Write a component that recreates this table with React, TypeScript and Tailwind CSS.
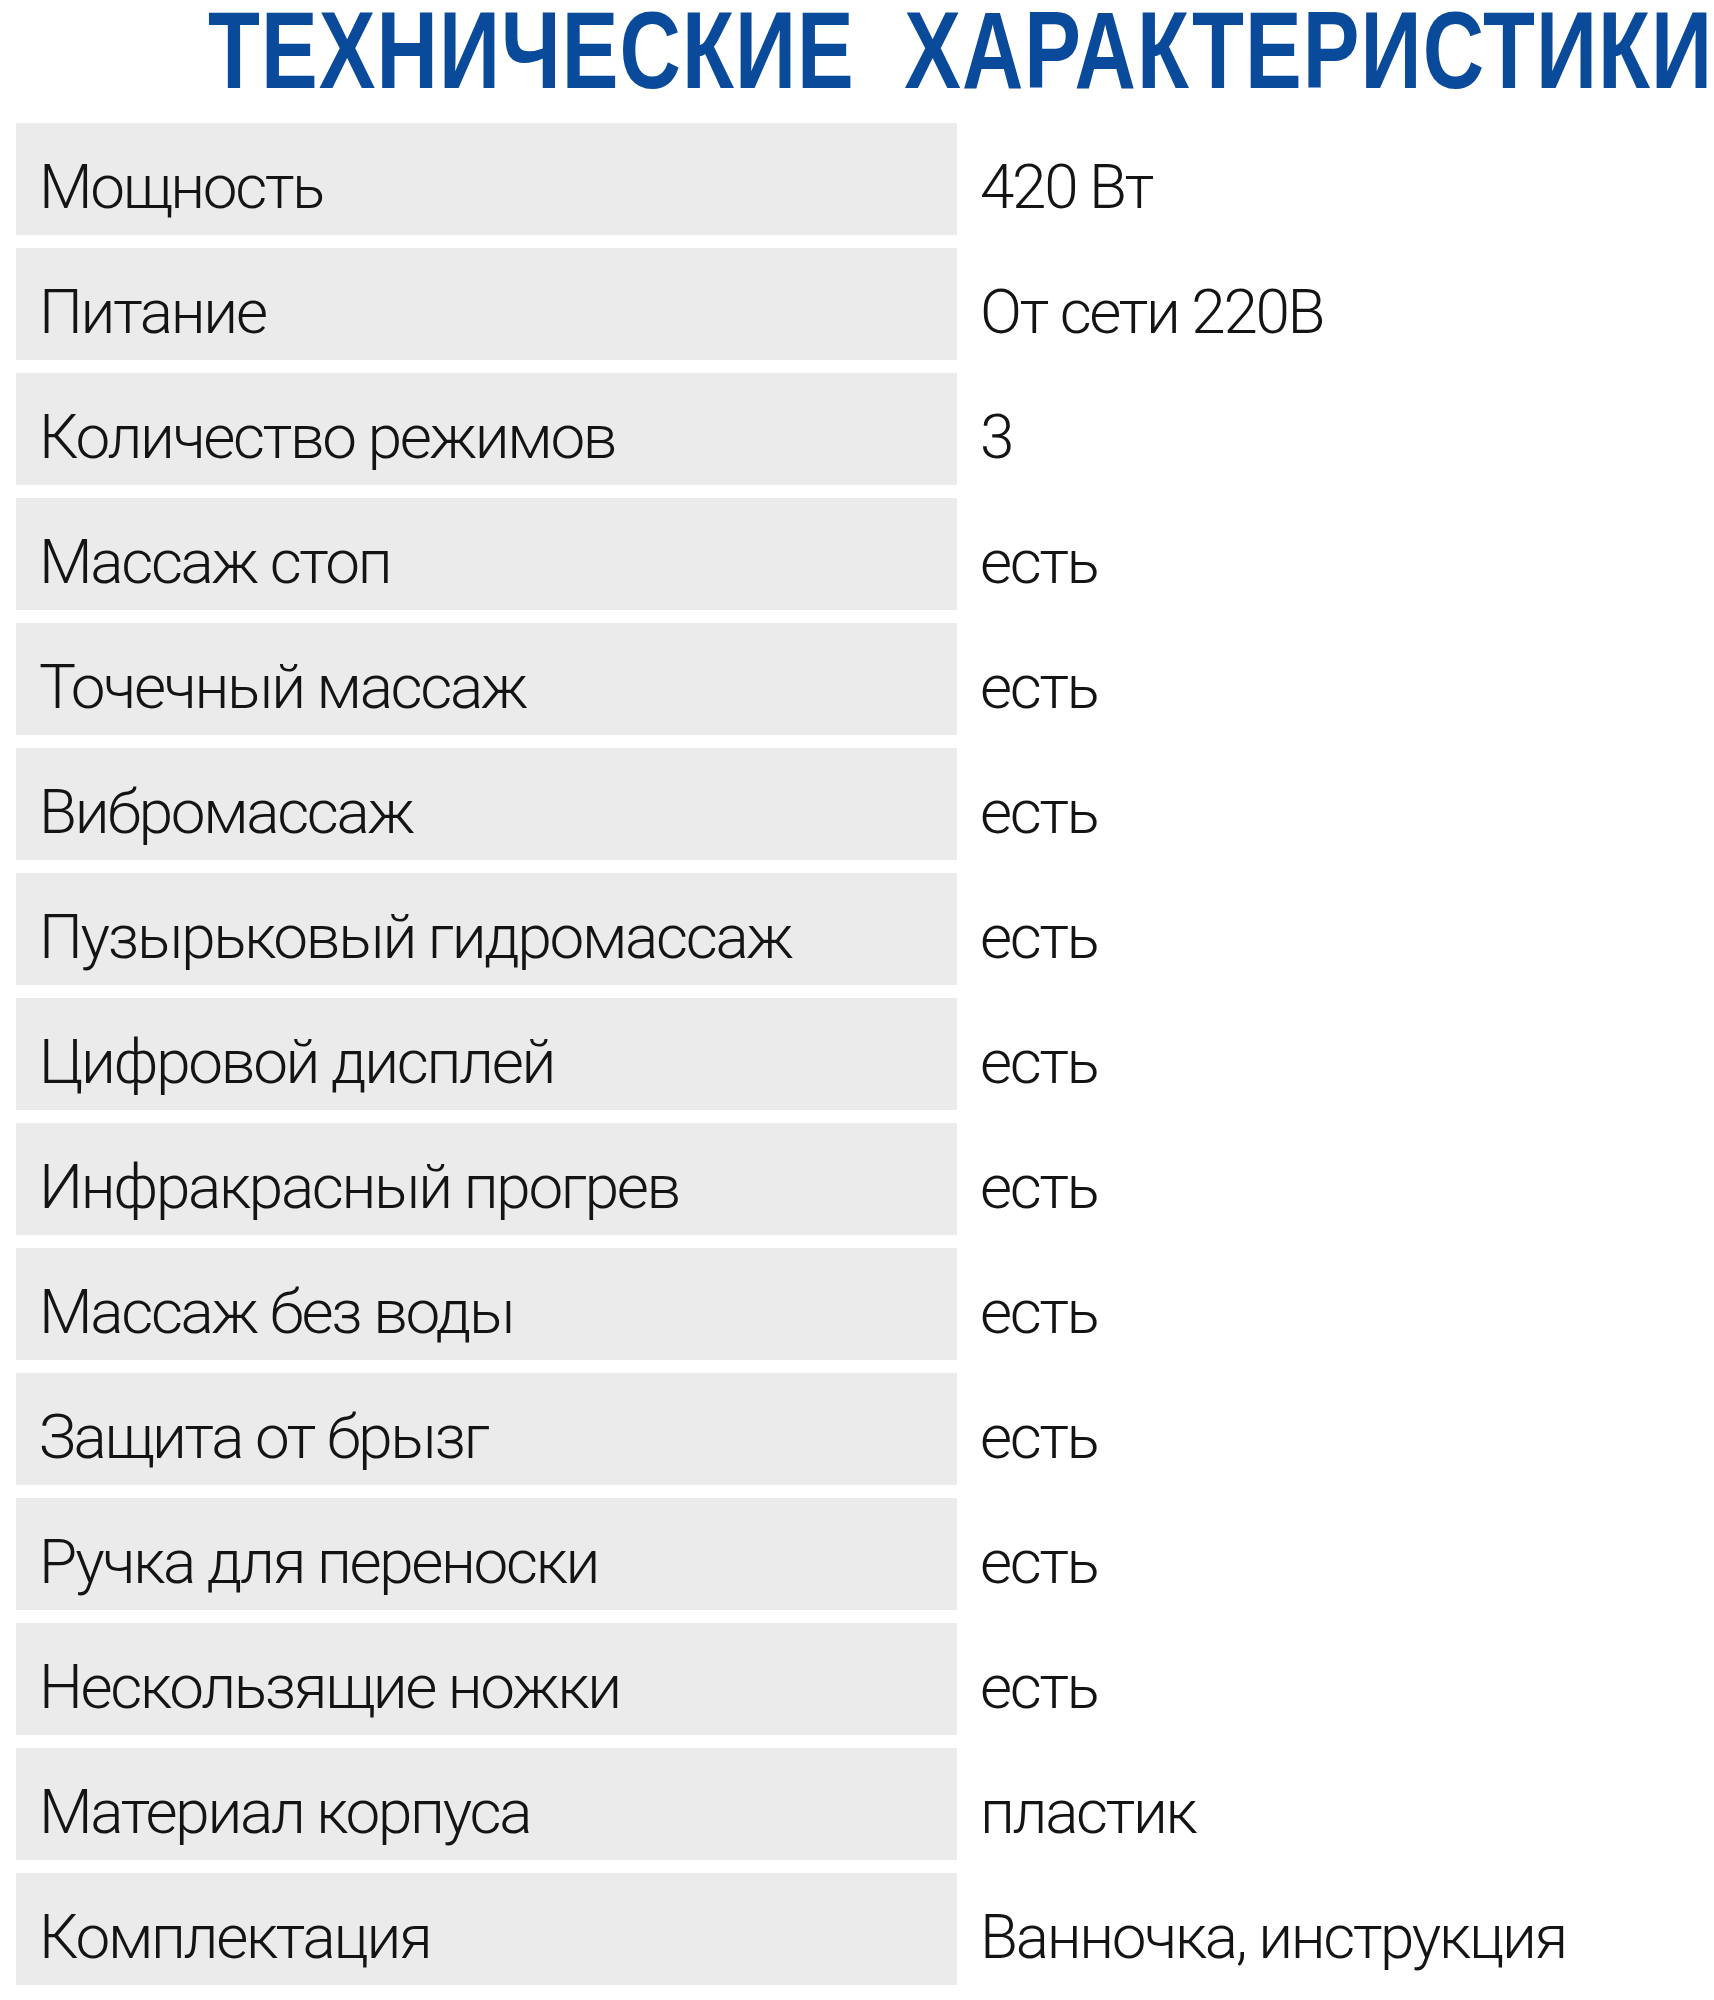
const specs: [string, string][] = [
  ['Мощность', '420 Вт'],
  ['Питание', 'От сети 220В'],
  ['Количество режимов', '3'],
  ['Массаж стоп', 'есть'],
  ['Точечный массаж', 'есть'],
  ['Вибромассаж', 'есть'],
  ['Пузырьковый гидромассаж', 'есть'],
  ['Цифровой дисплей', 'есть'],
  ['Инфракрасный прогрев', 'есть'],
  ['Массаж без воды', 'есть'],
  ['Защита от брызг', 'есть'],
  ['Ручка для переноски', 'есть'],
  ['Нескользящие ножки', 'есть'],
  ['Материал корпуса', 'пластик'],
  ['Комплектация', 'Ванночка, инструкция'],
];

export default function App() {
  return (
    <div className="w-[1714px] h-[2000px] bg-white overflow-hidden">
      {/* Title: condensed look by stretching a bold face vertically */}
      <div className="flex h-[123px] pl-[208px] pt-[23px]">
        <h1 className="h-[78px] whitespace-nowrap font-['Liberation_Sans',Arial,sans-serif] text-[85px] leading-[78px] font-bold text-[#0a4a9b] tracking-[1.05px] origin-bottom scale-y-[1.29]">
          ТЕХНИЧЕСКИЕ&nbsp;&nbsp;ХАРАКТЕРИСТИКИ
        </h1>
      </div>

      {/* Spec rows */}
      <div className="flex flex-col gap-[13px] font-['Roboto','Liberation_Sans',sans-serif] font-light text-[62px] leading-none tracking-[-2.3px] text-[#141414]">
        {specs.map(([label, value]) => (
          <div key={label} className="flex items-start h-[112px]">
            <div className="flex items-start ml-[16px] w-[941px] h-full bg-[#ebebeb] pl-[23px] pt-[33px]">
              <span>{label}</span>
            </div>
            <span className="ml-[23px] pt-[33px]">{value}</span>
          </div>
        ))}
      </div>
    </div>
  );
}
